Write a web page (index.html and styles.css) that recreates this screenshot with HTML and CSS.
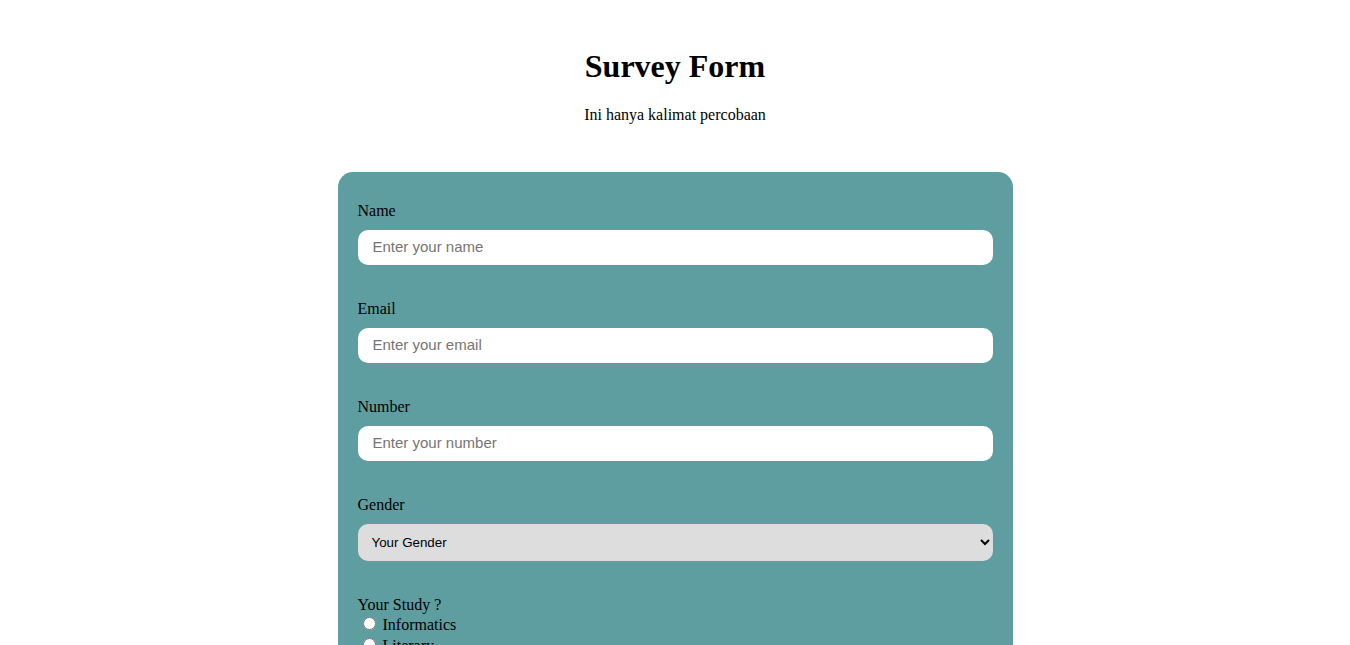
FILE: index.html
```html
<!DOCTYPE html>
<html>
<head>
<meta charset="utf-8">
<title>Survey Form</title>
<link rel="stylesheet" href="styles.css">
</head>
<body>
<header class="header">
  <h1 class="title">Survey Form</h1>
  <p class="subtitle">Ini hanya kalimat percobaan</p>
</header>
<form class="card">
  <div class="group">
    <label class="label" for="name">Name</label>
    <input class="field" id="name" type="text" placeholder="Enter your name">
  </div>
  <div class="group">
    <label class="label" for="email">Email</label>
    <input class="field" id="email" type="email" placeholder="Enter your email">
  </div>
  <div class="group">
    <label class="label" for="number">Number</label>
    <input class="field" id="number" type="number" placeholder="Enter your number">
  </div>
  <div class="group">
    <label class="label" for="gender">Gender</label>
    <select class="dropdown" id="gender">
      <option>Your Gender</option>
      <option>Male</option>
      <option>Female</option>
    </select>
  </div>
  <div class="group">
    <span class="label-plain">Your Study ?</span>
    <label class="radio-row"><input type="radio" name="study"> Informatics</label>
    <label class="radio-row"><input type="radio" name="study"> Literary</label>
    <label class="radio-row"><input type="radio" name="study"> Other</label>
  </div>
</form>
</body>
</html>
```

FILE: styles.css
```css
html, body {
  margin: 0;
  padding: 0;
  background: #ffffff;
  font-family: "Liberation Serif", "Times New Roman", serif;
  font-size: 16px;
  color: #000;
}
.header {
  text-align: center;
  padding-top: 48px;
}
.title {
  margin: 0 0 21px;
  font-size: 32px;
  line-height: 37px;
  font-weight: bold;
}
.subtitle {
  margin: 0;
  line-height: 18px;
}
.card {
  width: 50%;
  margin: 48px auto 0;
  background: #5f9ea0;
  border-radius: 15px;
  padding: 30px 20px 20px;
  box-sizing: border-box;
}
.group {
  margin-bottom: 35px;
}
.label {
  display: block;
  line-height: 18px;
  margin-bottom: 10px;
}
.label-plain {
  display: block;
  line-height: 18px;
}
.field {
  display: block;
  width: 100%;
  box-sizing: border-box;
  height: 35px;
  border: none;
  border-radius: 10px;
  padding: 0 15px 2px;
  font-family: "Liberation Sans", Arial, sans-serif;
  font-size: 15px;
  background: #fff;
  outline: none;
}
.field::placeholder {
  color: #757575;
}
.dropdown {
  display: block;
  width: 100%;
  box-sizing: border-box;
  height: 37px;
  border: none;
  border-radius: 10px;
  padding: 0 10px;
  background: #dddddd;
  font-family: "Liberation Sans", Arial, sans-serif;
  font-size: 13.33px;
  color: #000;
}
.radio-row {
  display: block;
  line-height: 20px;
}
.radio-row input {
  margin: 3px 3px 0 5px;
}
```
